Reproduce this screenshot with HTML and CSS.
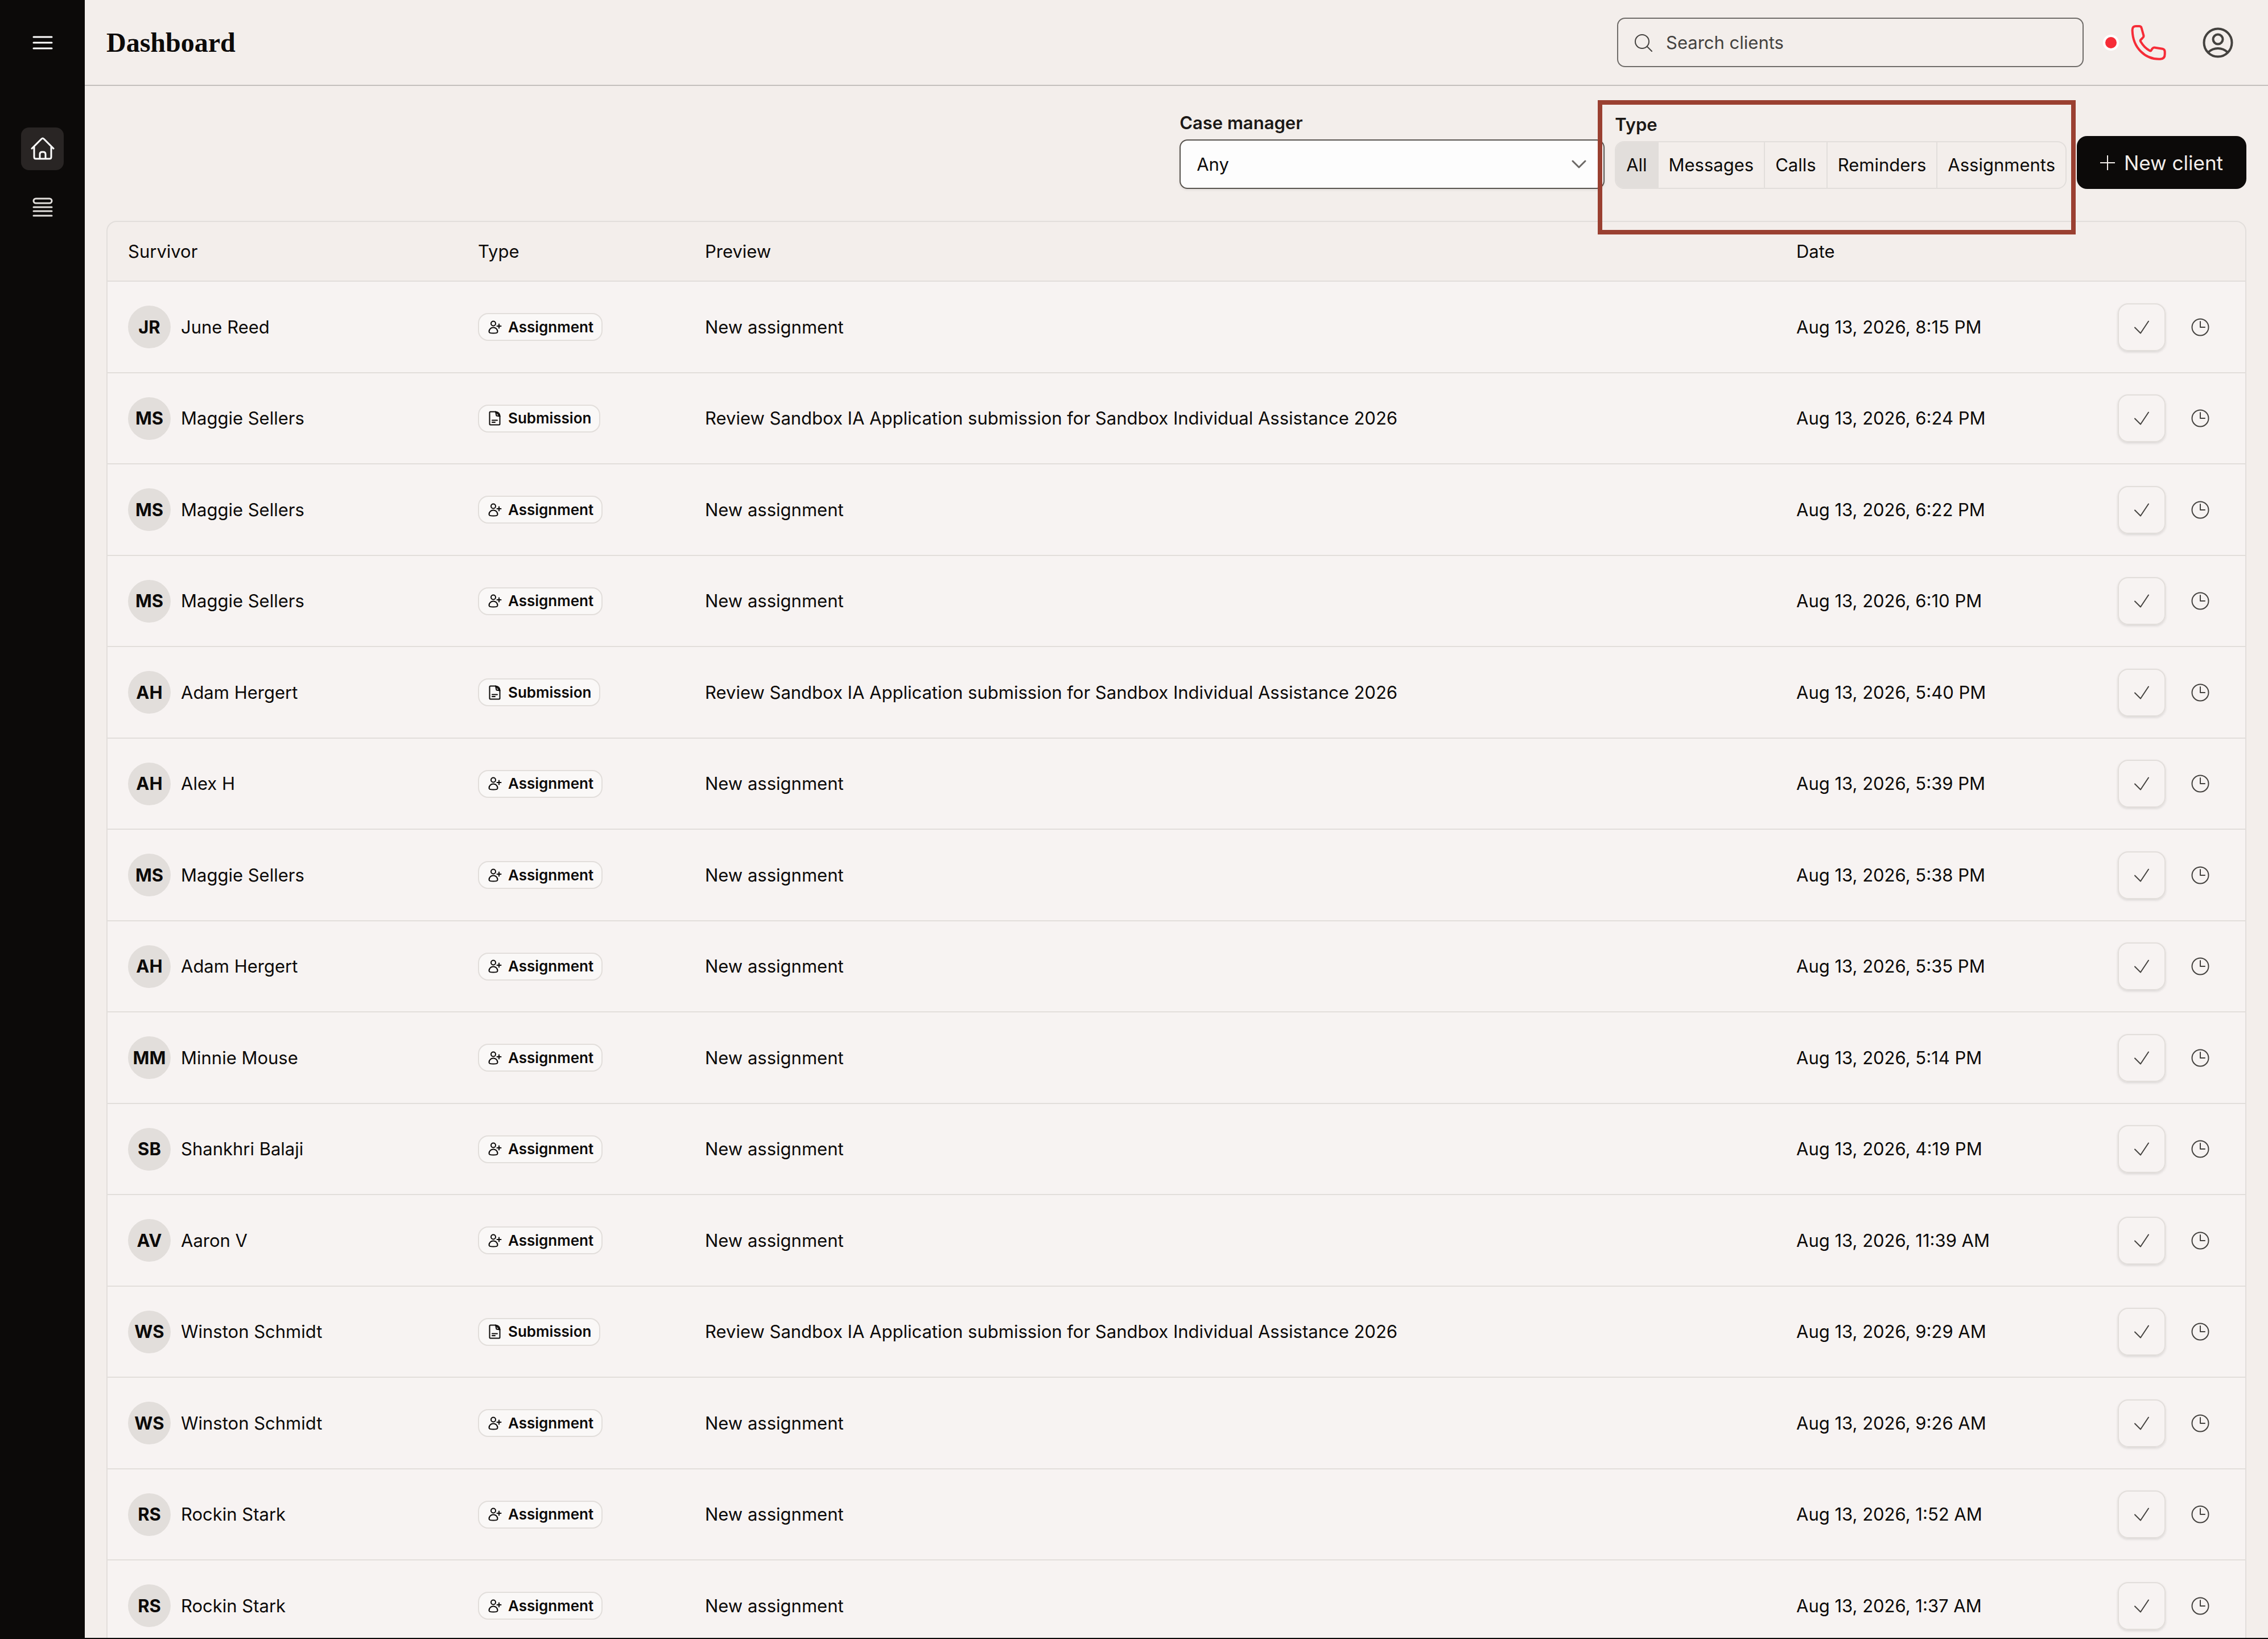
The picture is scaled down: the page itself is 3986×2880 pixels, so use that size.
FILE: index.html
```
<!DOCTYPE html>
<html lang="en">
<head>
  <meta charset="UTF-8" />
  <meta name="viewport" content="width=device-width, initial-scale=1.0"/>
  <title>Dashboard</title>
  <link rel="stylesheet" href="styles.css">
</head>
<body>

<!-- shared icons -->
<svg class="sprite" aria-hidden="true">
  <symbol id="assign" viewBox="0 0 24 24">
    <circle cx="9" cy="5.500" r="4"/>
    <path d="M1.500 20C1.500 15.500 5 12.500 9 12.500S16.500 15.500 16.500 20C16.500 22 13 22.500 9 22.500S1.500 22 1.500 20Z"/>
    <path d="M19 6.500V13.500M15.500 10H22.500"/>
  </symbol>
  <symbol id="doc" viewBox="0 0 24 26">
    <path d="M4 1.500H13L20.500 9V23Q20.500 24.500 19 24.500H4Q2.500 24.500 2.500 23V3Q2.500 1.500 4 1.500Z"/>
    <path d="M13 1.500Q20.500 2.500 20.500 9.500L14.500 8.500Z"/>
    <path d="M7 16.500H16M7 20H12"/>
  </symbol>
  <symbol id="check" viewBox="0 0 26 24">
    <path d="M1 12.500L11 22.500L25 1.500"/>
  </symbol>
  <symbol id="clock" viewBox="0 0 32 32">
    <circle cx="16" cy="16" r="14.500"/>
    <path d="M16 6V16H24"/>
  </symbol>
</svg>

<div class="app">
  <nav class="sidebar">
    <button class="nav-btn" aria-label="Menu">
      <svg class="nav-icon" viewBox="0 0 36 36"><path d="M2 8H34M2 18H34M2 28H34"/></svg>
    </button>
    <a class="nav-btn active" href="#" aria-label="Home">
      <svg class="home-icon" viewBox="0 0 42 42"><path d="M2 20L19 3Q21 1 23 3L40 20M6 17V35Q6 38 9 38H33Q36 38 36 35V17M16 38V30Q16 26 20 26H22Q26 26 26 30V38"/></svg>
    </a>
    <a class="nav-btn" href="#" aria-label="Clients">
      <svg class="nav-icon dim" viewBox="0 0 36 36"><rect x="2" y="2" width="32" height="8" rx="4"/><path d="M2 17H34M2 24H34M2 32H34"/></svg>
    </a>
  </nav>

  <main class="main">
    <header class="topbar">
      <h1>Dashboard</h1>
      <label class="search">
        <svg class="search-icon" viewBox="0 0 32 32"><circle cx="14" cy="14" r="12"/><path d="M23 23L31 31"/></svg>
        <input type="text" placeholder="Search clients" aria-label="Search clients">
      </label>
      <span class="dot"></span>
      <button class="icon-btn phone" aria-label="Phone">
        <svg viewBox="195 71 186 186"><path d="M203 102Q201 77 222 77H238Q249 77 251 86L262 126Q264 134 256 140L247 149Q243 153 247 159C258 178 275 196 294 206Q300 209 303 203L308 195Q314 189 323 190L361 196Q374 199 374 211V225Q374 250 350 250C270 254 206 190 203 102Z"/></svg>
      </button>
      <button class="icon-btn user" aria-label="Account">
        <svg viewBox="0 0 54 54"><circle cx="27" cy="27" r="24.500"/><circle cx="27" cy="21" r="8.500"/><path d="M10 44C14 40 20 37 27 37S40 40 44 44"/></svg>
      </button>
    </header>

    <section class="filters">
      <div class="field manager">
        <label for="manager">Case manager</label>
        <div class="select-wrap">
          <select id="manager"><option>Any</option></select>
          <svg class="chevron" viewBox="0 0 26 16"><path d="M2 2L13 13L24 2"/></svg>
        </div>
      </div>
      <div class="field type">
        <span class="field-label" id="typeLabel">Type</span>
        <div class="segments" role="group" aria-labelledby="typeLabel">
          <button class="selected">All</button>
          <button>Messages</button>
          <button>Calls</button>
          <button>Reminders</button>
          <button>Assignments</button>
        </div>
        <div class="highlight"></div>
      </div>
      <button class="new-client">
        <svg viewBox="0 0 26 26"><path d="M13 0V26M0 13H26"/></svg>
        New client
      </button>
    </section>

    <div class="table-card">
      <table>
        <colgroup>
          <col class="col-survivor"><col class="col-type"><col><col class="col-date"><col class="col-actions">
        </colgroup>
        <thead>
          <tr><th>Survivor</th><th>Type</th><th>Preview</th><th>Date</th><th></th></tr>
        </thead>
        <tbody>
          <tr>
            <td><div class="person"><span class="avatar">JR</span>June Reed</div></td>
            <td><span class="badge"><svg><use href="#assign"/></svg>Assignment</span></td>
            <td>New assignment</td>
            <td>Aug 13, 2026, 8:15 PM</td>
            <td><div class="actions"><button class="done" aria-label="Done"><svg><use href="#check"/></svg></button><button class="snooze" aria-label="Snooze"><svg><use href="#clock"/></svg></button></div></td>
          </tr>
          <tr>
            <td><div class="person"><span class="avatar">MS</span>Maggie Sellers</div></td>
            <td><span class="badge"><svg><use href="#doc"/></svg>Submission</span></td>
            <td>Review Sandbox IA Application submission for Sandbox Individual Assistance 2026</td>
            <td>Aug 13, 2026, 6:24 PM</td>
            <td><div class="actions"><button class="done" aria-label="Done"><svg><use href="#check"/></svg></button><button class="snooze" aria-label="Snooze"><svg><use href="#clock"/></svg></button></div></td>
          </tr>
          <tr>
            <td><div class="person"><span class="avatar">MS</span>Maggie Sellers</div></td>
            <td><span class="badge"><svg><use href="#assign"/></svg>Assignment</span></td>
            <td>New assignment</td>
            <td>Aug 13, 2026, 6:22 PM</td>
            <td><div class="actions"><button class="done" aria-label="Done"><svg><use href="#check"/></svg></button><button class="snooze" aria-label="Snooze"><svg><use href="#clock"/></svg></button></div></td>
          </tr>
          <tr>
            <td><div class="person"><span class="avatar">MS</span>Maggie Sellers</div></td>
            <td><span class="badge"><svg><use href="#assign"/></svg>Assignment</span></td>
            <td>New assignment</td>
            <td>Aug 13, 2026, 6:10 PM</td>
            <td><div class="actions"><button class="done" aria-label="Done"><svg><use href="#check"/></svg></button><button class="snooze" aria-label="Snooze"><svg><use href="#clock"/></svg></button></div></td>
          </tr>
          <tr>
            <td><div class="person"><span class="avatar">AH</span>Adam Hergert</div></td>
            <td><span class="badge"><svg><use href="#doc"/></svg>Submission</span></td>
            <td>Review Sandbox IA Application submission for Sandbox Individual Assistance 2026</td>
            <td>Aug 13, 2026, 5:40 PM</td>
            <td><div class="actions"><button class="done" aria-label="Done"><svg><use href="#check"/></svg></button><button class="snooze" aria-label="Snooze"><svg><use href="#clock"/></svg></button></div></td>
          </tr>
          <tr>
            <td><div class="person"><span class="avatar">AH</span>Alex H</div></td>
            <td><span class="badge"><svg><use href="#assign"/></svg>Assignment</span></td>
            <td>New assignment</td>
            <td>Aug 13, 2026, 5:39 PM</td>
            <td><div class="actions"><button class="done" aria-label="Done"><svg><use href="#check"/></svg></button><button class="snooze" aria-label="Snooze"><svg><use href="#clock"/></svg></button></div></td>
          </tr>
          <tr>
            <td><div class="person"><span class="avatar">MS</span>Maggie Sellers</div></td>
            <td><span class="badge"><svg><use href="#assign"/></svg>Assignment</span></td>
            <td>New assignment</td>
            <td>Aug 13, 2026, 5:38 PM</td>
            <td><div class="actions"><button class="done" aria-label="Done"><svg><use href="#check"/></svg></button><button class="snooze" aria-label="Snooze"><svg><use href="#clock"/></svg></button></div></td>
          </tr>
          <tr>
            <td><div class="person"><span class="avatar">AH</span>Adam Hergert</div></td>
            <td><span class="badge"><svg><use href="#assign"/></svg>Assignment</span></td>
            <td>New assignment</td>
            <td>Aug 13, 2026, 5:35 PM</td>
            <td><div class="actions"><button class="done" aria-label="Done"><svg><use href="#check"/></svg></button><button class="snooze" aria-label="Snooze"><svg><use href="#clock"/></svg></button></div></td>
          </tr>
          <tr>
            <td><div class="person"><span class="avatar">MM</span>Minnie Mouse</div></td>
            <td><span class="badge"><svg><use href="#assign"/></svg>Assignment</span></td>
            <td>New assignment</td>
            <td>Aug 13, 2026, 5:14 PM</td>
            <td><div class="actions"><button class="done" aria-label="Done"><svg><use href="#check"/></svg></button><button class="snooze" aria-label="Snooze"><svg><use href="#clock"/></svg></button></div></td>
          </tr>
          <tr>
            <td><div class="person"><span class="avatar">SB</span>Shankhri Balaji</div></td>
            <td><span class="badge"><svg><use href="#assign"/></svg>Assignment</span></td>
            <td>New assignment</td>
            <td>Aug 13, 2026, 4:19 PM</td>
            <td><div class="actions"><button class="done" aria-label="Done"><svg><use href="#check"/></svg></button><button class="snooze" aria-label="Snooze"><svg><use href="#clock"/></svg></button></div></td>
          </tr>
          <tr>
            <td><div class="person"><span class="avatar">AV</span>Aaron V</div></td>
            <td><span class="badge"><svg><use href="#assign"/></svg>Assignment</span></td>
            <td>New assignment</td>
            <td>Aug 13, 2026, 11:39 AM</td>
            <td><div class="actions"><button class="done" aria-label="Done"><svg><use href="#check"/></svg></button><button class="snooze" aria-label="Snooze"><svg><use href="#clock"/></svg></button></div></td>
          </tr>
          <tr>
            <td><div class="person"><span class="avatar">WS</span>Winston Schmidt</div></td>
            <td><span class="badge"><svg><use href="#doc"/></svg>Submission</span></td>
            <td>Review Sandbox IA Application submission for Sandbox Individual Assistance 2026</td>
            <td>Aug 13, 2026, 9:29 AM</td>
            <td><div class="actions"><button class="done" aria-label="Done"><svg><use href="#check"/></svg></button><button class="snooze" aria-label="Snooze"><svg><use href="#clock"/></svg></button></div></td>
          </tr>
          <tr>
            <td><div class="person"><span class="avatar">WS</span>Winston Schmidt</div></td>
            <td><span class="badge"><svg><use href="#assign"/></svg>Assignment</span></td>
            <td>New assignment</td>
            <td>Aug 13, 2026, 9:26 AM</td>
            <td><div class="actions"><button class="done" aria-label="Done"><svg><use href="#check"/></svg></button><button class="snooze" aria-label="Snooze"><svg><use href="#clock"/></svg></button></div></td>
          </tr>
          <tr>
            <td><div class="person"><span class="avatar">RS</span>Rockin Stark</div></td>
            <td><span class="badge"><svg><use href="#assign"/></svg>Assignment</span></td>
            <td>New assignment</td>
            <td>Aug 13, 2026, 1:52 AM</td>
            <td><div class="actions"><button class="done" aria-label="Done"><svg><use href="#check"/></svg></button><button class="snooze" aria-label="Snooze"><svg><use href="#clock"/></svg></button></div></td>
          </tr>
          <tr>
            <td><div class="person"><span class="avatar">RS</span>Rockin Stark</div></td>
            <td><span class="badge"><svg><use href="#assign"/></svg>Assignment</span></td>
            <td>New assignment</td>
            <td>Aug 13, 2026, 1:37 AM</td>
            <td><div class="actions"><button class="done" aria-label="Done"><svg><use href="#check"/></svg></button><button class="snooze" aria-label="Snooze"><svg><use href="#clock"/></svg></button></div></td>
          </tr>
        </tbody>
      </table>
    </div>
  </main>
</div>

</body>
</html>
```
FILE: styles.css
```
* {
  box-sizing: border-box;
}
body {
  margin: 0;
  background: #f3eeeb;
  color: #0c0a09;
  font-family: Inter, 'Liberation Sans', sans-serif;
  font-size: 31px;
  line-height: 42px;
}
button, input, select {
  font: inherit;
  color: inherit;
}
button {
  padding: 0;
  border: none;
  background: none;
  cursor: pointer;
}
svg {
  display: block;
  flex: none;
  fill: none;
  stroke: currentColor;
  stroke-linecap: round;
  stroke-linejoin: round;
}
.sprite {
  position: absolute;
  width: 0;
  height: 0;
}
.app {
  display: flex;
  height: 100vh;
  overflow: hidden;
  border-bottom: 2px solid #0c0a09;
}

/* sidebar */
.sidebar {
  flex: none;
  width: 149px;
  padding-top: 37px;
  background: #0c0a09;
  color: #fff;
  display: flex;
  flex-direction: column;
  align-items: center;
  gap: 28px;
}
.nav-btn {
  width: 75px;
  height: 75px;
  border-radius: 14px;
  display: flex;
  align-items: center;
  justify-content: center;
  color: inherit;
}
.nav-btn.active {
  margin-top: 84px;
  background: #292524;
}
.nav-icon {
  width: 36px;
  height: 36px;
  stroke-width: 3;
}
.home-icon {
  width: 42px;
  height: 42px;
  stroke-width: 3;
}
.dim {
  color: #e2dfdc;
}

/* top bar */
.main {
  flex: 1;
  min-width: 0;
}
.topbar {
  display: flex;
  align-items: center;
  height: 151px;
  padding: 0 61px 0 38px;
  border-bottom: 2px solid #c3bfbc;
}
h1 {
  margin: 0 auto 0 0;
  font-family: 'Liberation Serif', serif;
  font-size: 48px;
  line-height: 60px;
  font-weight: bold;
}
.search {
  display: flex;
  align-items: center;
  gap: 24px;
  width: 820px;
  height: 87px;
  padding: 0 28px;
  border: 2px solid #6f6c69;
  border-radius: 14px;
  color: #44423f;
}
.search-icon {
  width: 32px;
  height: 32px;
  stroke-width: 2;
}
.search input {
  flex: 1;
  min-width: 0;
  padding: 0;
  border: none;
  outline: none;
  background: none;
}
.search input::placeholder {
  color: #44423f;
  opacity: 1;
}
.dot {
  width: 28px;
  height: 28px;
  margin: 0 21px 0 34px;
  border: 4px solid #fff;
  border-radius: 50%;
  background: #f62c37;
}
.phone svg {
  width: 62px;
  height: 62px;
  color: #f62c37;
  stroke-width: 12;
}
.user {
  margin-left: 64px;
}
.user svg {
  width: 54px;
  height: 54px;
  color: #44423f;
  stroke-width: 4;
}

/* filters */
.filters {
  display: flex;
  justify-content: flex-end;
  align-items: flex-end;
  gap: 18px;
  padding: 44px 38px 56px;
}
.field {
  display: flex;
  flex-direction: column;
  gap: 8px;
  position: relative;
}
.field label, .field-label {
  font-weight: 600;
  color: #1c1917;
}
.manager {
  width: 747px;
}
.select-wrap {
  position: relative;
}
select {
  display: block;
  width: 100%;
  height: 87px;
  padding: 0 28px;
  border: 2px solid #57534e;
  border-radius: 14px;
  background: #fdfdfd;
  appearance: none;
  box-shadow: 0 2px 4px rgba(0, 0, 0, 0.08);
}
.chevron {
  position: absolute;
  right: 32px;
  top: 36px;
  width: 26px;
  height: 16px;
  color: #6b6865;
  stroke-width: 3;
  pointer-events: none;
}
.segments {
  display: flex;
  height: 84px;
  border: 2px solid #e2dedb;
  border-radius: 16px;
  overflow: hidden;
}
.segments button {
  padding: 0 18px;
}
.segments button + button {
  border-left: 2px solid #e2dedb;
}
.segments .selected {
  background: #e2dedb;
}
.highlight {
  position: absolute;
  top: -22px;
  left: -30px;
  right: -16px;
  bottom: -80px;
  border: 8px solid #9a4031;
  pointer-events: none;
}
.new-client {
  display: flex;
  align-items: center;
  justify-content: center;
  gap: 16px;
  width: 298px;
  height: 93px;
  border-radius: 18px;
  background: #0c0a09;
  color: #f3eeeb;
  font-size: 35px;
  white-space: nowrap;
}
.new-client svg {
  width: 26px;
  height: 26px;
  stroke-width: 2;
}

/* table */
.table-card {
  margin: 0 38px;
  border: 2px solid #e2dedb;
  border-radius: 18px;
  overflow: hidden;
}
table {
  width: 100%;
  table-layout: fixed;
  border-collapse: separate;
  border-spacing: 0;
}
.col-survivor { width: 615px; }
.col-type { width: 399px; }
.col-date { width: 565px; }
.col-actions { width: 260px; }
th, td {
  padding: 0 0 0 36px;
  text-align: left;
  vertical-align: middle;
  white-space: nowrap;
  border-bottom: 2px solid #e2dedb;
}
th {
  height: 105px;
  font-weight: 400;
}
td {
  height: 160px;
  background: #f7f3f2;
}
tr:nth-child(odd) td {
  height: 161px;
}
.person {
  display: flex;
  align-items: center;
  gap: 18px;
}
.avatar {
  width: 75px;
  height: 75px;
  border-radius: 50%;
  background: #e2dedb;
  font-weight: 700;
  display: flex;
  align-items: center;
  justify-content: center;
}
.badge {
  display: inline-flex;
  align-items: center;
  gap: 11px;
  height: 49px;
  padding: 0 14px 0 16px;
  border: 2px solid #e2dedb;
  border-radius: 18px;
  background: #faf8f7;
  font-size: 26px;
  font-weight: 600;
  vertical-align: middle;
}
.badge svg {
  width: 24px;
  height: 26px;
  stroke-width: 2;
}
.actions {
  display: flex;
  align-items: center;
  gap: 45px;
}
.done {
  width: 84px;
  height: 84px;
  border: 2px solid #e2dedb;
  border-radius: 18px;
  box-shadow: 0 2px 4px rgba(0, 0, 0, 0.12);
  display: flex;
  align-items: center;
  justify-content: center;
}
.done svg {
  width: 26px;
  height: 24px;
  color: #44423f;
  stroke-width: 2;
}
.snooze svg {
  width: 32px;
  height: 32px;
  color: #44423f;
  stroke-width: 2;
}
```
